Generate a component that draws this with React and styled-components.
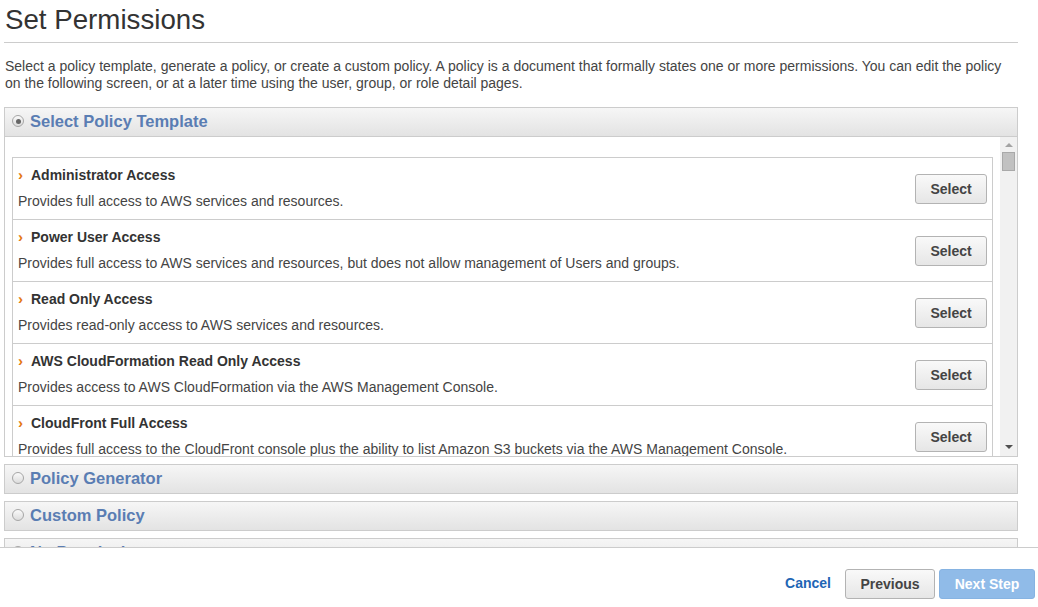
import React from 'react';
import styled, { createGlobalStyle } from 'styled-components';

const templates = [
  {
    name: 'Administrator Access',
    desc: 'Provides full access to AWS services and resources.',
  },
  {
    name: 'Power User Access',
    desc: 'Provides full access to AWS services and resources, but does not allow management of Users and groups.',
  },
  {
    name: 'Read Only Access',
    desc: 'Provides read-only access to AWS services and resources.',
  },
  {
    name: 'AWS CloudFormation Read Only Access',
    desc: 'Provides access to AWS CloudFormation via the AWS Management Console.',
  },
  {
    name: 'CloudFront Full Access',
    desc: 'Provides full access to the CloudFront console plus the ability to list Amazon S3 buckets via the AWS Management Console.',
  },
  {
    name: 'CloudFront Read Only Access',
    desc: 'Provides access to CloudFront distribution configuration information and the ability to list Amazon S3 buckets.',
  },
];

function App() {
  return (
    <Page>
      <GlobalStyle />
      <Content>
        <Title>Set Permissions</Title>
        <Intro>
          Select a policy template, generate a policy, or create a custom
          policy. A policy is a document that formally states one or more
          permissions. You can edit the policy on the following screen, or at a
          later time using the user, group, or role detail pages.
        </Intro>

        <Panel>
          <PanelHeader>
            <Radio checked />
            <PanelTitle>Select Policy Template</PanelTitle>
          </PanelHeader>
          <PanelBody>
            <ListArea>
              <TemplateList>
                {templates.map((t) => (
                  <TemplateItem key={t.name}>
                    <TemplateText>
                      <TemplateName>
                        <Chevron>›</Chevron>
                        {t.name}
                      </TemplateName>
                      <TemplateDesc>{t.desc}</TemplateDesc>
                    </TemplateText>
                    <SelectButton>Select</SelectButton>
                  </TemplateItem>
                ))}
              </TemplateList>
            </ListArea>
            <Scrollbar>
              <ArrowUp />
              <Thumb />
              <Track />
              <ArrowDown />
            </Scrollbar>
          </PanelBody>
        </Panel>

        <Panel>
          <PanelHeader>
            <Radio />
            <PanelTitle>Policy Generator</PanelTitle>
          </PanelHeader>
        </Panel>

        <Panel>
          <PanelHeader>
            <Radio />
            <PanelTitle>Custom Policy</PanelTitle>
          </PanelHeader>
        </Panel>

        <Panel>
          <PanelHeader>
            <Radio />
            <PanelTitle>No Permissions</PanelTitle>
          </PanelHeader>
        </Panel>
      </Content>

      <Footer>
        <CancelLink href="#">Cancel</CancelLink>
        <Button>Previous</Button>
        <PrimaryButton disabled>Next Step</PrimaryButton>
      </Footer>
    </Page>
  );
}

export default App;

const GlobalStyle = createGlobalStyle`
  body {
    margin: 0;
    background: #fff;
    font-family: "Liberation Sans", Arial, sans-serif;
  }
`;

const Page = styled.div`
  display: flex;
  flex-direction: column;
  height: 607px;
  overflow: hidden;
`;

const Content = styled.main`
  height: 547px;
  overflow: hidden;
  padding: 0 20px 0 4px;
  box-sizing: border-box;
`;

const Title = styled.h1`
  margin: 0;
  padding: 4px 0 6px 1px;
  font-size: 27.7px;
  line-height: 32px;
  font-weight: normal;
  color: #333;
  border-bottom: 1px solid #ccc;
`;

const Intro = styled.p`
  margin: 15px 0 15px 1px;
  font-size: 14px;
  line-height: 17px;
  color: #444;
`;

const Panel = styled.section`
  border: 1px solid #ccc;

  & + section {
    margin-top: 7px;
  }
`;

const PanelHeader = styled.div`
  display: flex;
  align-items: center;
  gap: 6px;
  height: 28px;
  box-sizing: border-box;
  padding: 0 0 2px 7px;
  background: linear-gradient(#f6f6f6, #e3e3e3);
`;

const Radio = styled.span`
  position: relative;
  width: 10px;
  height: 10px;
  border: 1px solid #a6a6a6;
  border-radius: 50%;
  background: linear-gradient(#fafafa, #dcdcdc);
  flex-shrink: 0;

  &::after {
    content: '';
    display: ${({ checked }) => (checked ? 'block' : 'none')};
    position: absolute;
    top: 2.5px;
    left: 2.5px;
    width: 5px;
    height: 5px;
    border-radius: 50%;
    background: #666;
  }
`;

const PanelTitle = styled.h2`
  margin: 0;
  font-size: 16.5px;
  font-weight: 700;
  color: #5a7db3;
`;

const PanelBody = styled.div`
  display: flex;
  height: 319px;
  border-top: 1px solid #ccc;
`;

const ListArea = styled.div`
  flex: 1;
  overflow: hidden;
  padding: 20px 7px 0;
`;

const TemplateList = styled.ul`
  margin: 0;
  padding: 0;
  list-style: none;
  border: 1px solid #ccc;
  border-bottom: none;
`;

const TemplateItem = styled.li`
  display: flex;
  align-items: flex-start;
  height: 62px;
  box-sizing: border-box;
  padding: 8px 5px 0;
  border-bottom: 1px solid #ccc;
`;

const TemplateText = styled.div`
  flex: 1;
`;

const TemplateName = styled.div`
  display: flex;
  align-items: baseline;
  font-size: 14px;
  line-height: 17px;
  font-weight: 700;
  color: #333;
`;

const Chevron = styled.span`
  width: 13px;
  color: #e47911;
  font-size: 15px;
`;

const TemplateDesc = styled.div`
  margin-top: 9px;
  font-size: 14px;
  line-height: 17px;
  color: #444;
`;

const SelectButton = styled.button`
  margin-top: 8px;
  width: 72px;
  height: 30px;
  padding: 0;
  border: 1px solid #b3b3b3;
  border-radius: 3px;
  background: linear-gradient(#f9f9f9, #e6e6e6);
  font-family: inherit;
  font-size: 14px;
  font-weight: 700;
  color: #444;
  cursor: pointer;
`;

const Scrollbar = styled.div`
  display: flex;
  flex-direction: column;
  align-items: center;
  width: 17px;
  background: #f1f1f1;
`;

const ArrowUp = styled.span`
  margin: 6px 0 5px;
  width: 0;
  height: 0;
  border-left: 4px solid transparent;
  border-right: 4px solid transparent;
  border-bottom: 4px solid #a3a3a3;
`;

const ArrowDown = styled.span`
  margin: 0 0 7px;
  width: 0;
  height: 0;
  border-left: 4px solid transparent;
  border-right: 4px solid transparent;
  border-top: 4px solid #505050;
`;

const Thumb = styled.span`
  width: 11px;
  height: 17px;
  border: 1px solid #a9a9a9;
  background: #c1c1c1;
`;

const Track = styled.span`
  flex: 1;
`;

const Footer = styled.footer`
  display: flex;
  align-items: flex-start;
  justify-content: flex-end;
  gap: 4px;
  flex: 1;
  padding: 21px 3px 0 0;
  border-top: 1px solid #ccc;
`;

const CancelLink = styled.a`
  margin: 6px 10px 0 0;
  font-size: 14px;
  font-weight: 700;
  color: #1f66b5;
  text-decoration: none;
`;

const Button = styled.button`
  width: 90px;
  height: 30px;
  padding: 0;
  border: 1px solid #b3b3b3;
  border-radius: 3px;
  background: linear-gradient(#f9f9f9, #e6e6e6);
  font-family: inherit;
  font-size: 14px;
  font-weight: 700;
  color: #444;
`;

const PrimaryButton = styled(Button)`
  width: 96px;
  border-color: #86b3e2;
  background: #90bbe8;
  color: #fff;
`;
